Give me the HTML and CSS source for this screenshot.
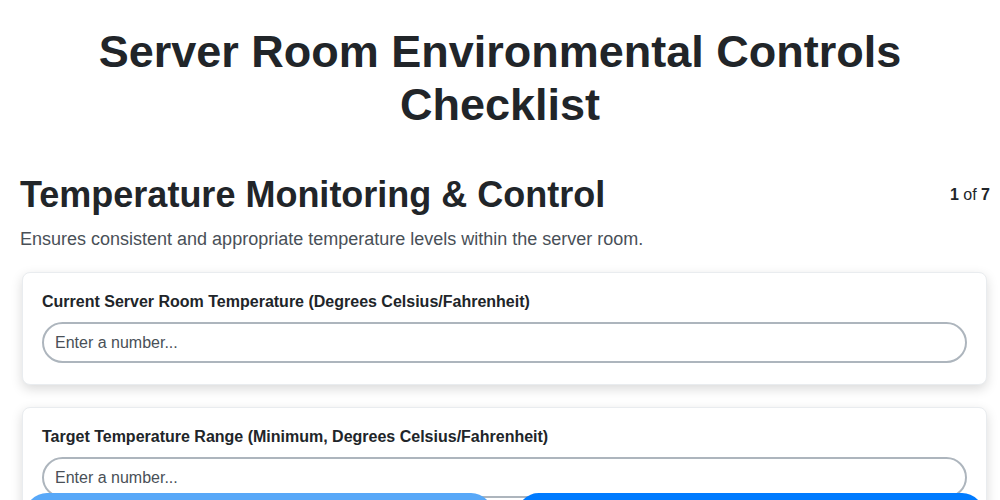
FILE: index.html
```html
<!DOCTYPE html>
<html lang="en">
<head>
    <meta charset="utf-8">
    <title>Server Room Environmental Controls Checklist</title>
    <link rel="stylesheet" href="styles.css">
</head>
<body>
    <div class="pagina">
        <h1 class="titulo">Server Room Environmental Controls Checklist</h1>

        <div class="seccion-head">
            <h2 class="seccion-titulo">Temperature Monitoring &amp; Control</h2>
            <span class="contador"><b>1</b> of <b>7</b></span>
        </div>
        <p class="seccion-desc">Ensures consistent and appropriate temperature levels within the server room.</p>

        <div class="tarjeta">
            <label class="etiqueta" for="temp1">Current Server Room Temperature (Degrees Celsius/Fahrenheit)</label>
            <input class="campo" type="number" id="temp1" placeholder="Enter a number...">
        </div>

        <div class="tarjeta">
            <label class="etiqueta" for="temp2">Target Temperature Range (Minimum, Degrees Celsius/Fahrenheit)</label>
            <input class="campo" type="number" id="temp2" placeholder="Enter a number...">
        </div>
    </div>

    <div class="navegacion">
        <button class="boton boton-prev" type="button" aria-label="Previous" disabled></button>
        <button class="boton boton-next" type="button" aria-label="Next"></button>
    </div>
</body>
</html>
```

FILE: styles.css
```css
*{box-sizing: border-box;}

body{
    margin: 0;
    background-color: white;
    color: #212529;
    font-family: "Liberation Sans", Arial, sans-serif;
}

.pagina{
    padding: 25px 10px 80px 20px;
}

.titulo{
    font-size: 45px;
    line-height: 53px;
    font-weight: bold;
    text-align: center;
    margin: 0 0 42px 0;
    padding: 0 65px 0 55px;
}

.seccion-head{
    display: flex;
    justify-content: space-between;
    align-items: center;
}

.seccion-titulo{
    font-size: 36px;
    line-height: 1.2;
    font-weight: bold;
    margin: 0;
}

.contador{
    font-size: 16px;
    color: #212529;
}

.seccion-desc{
    font-size: 18px;
    line-height: 20px;
    color: #495057;
    margin: 13px 0 23px 0;
}

.tarjeta{
    background-color: white;
    border: 1px solid #e9ecef;
    border-radius: 8px;
    box-shadow: 0 4px 12px rgba(0, 0, 0, 0.15);
    padding: 20px 19px 21px 19px;
    margin: 0 3px 22px 2px;
}

.etiqueta{
    display: block;
    font-size: 16px;
    line-height: 18px;
    font-weight: bold;
    margin-bottom: 11px;
}

.campo{
    display: block;
    width: 100%;
    height: 41px;
    padding: 0 11px;
    border: 2px solid #adb5bd;
    border-radius: 999px;
    font-family: "Liberation Sans", Arial, sans-serif;
    font-size: 16px;
    color: #212529;
    background-color: white;
}

.campo::placeholder{
    color: #495057;
}

.navegacion{
    position: fixed;
    left: 25px;
    right: 16px;
    bottom: -37px;
    display: flex;
    gap: 24px;
}

.boton{
    flex: 1;
    height: 44px;
    border: none;
    border-radius: 22px;
}

.boton-prev{
    background-color: #58a8f8;
}

.boton-next{
    background-color: #007bff;
}
```
